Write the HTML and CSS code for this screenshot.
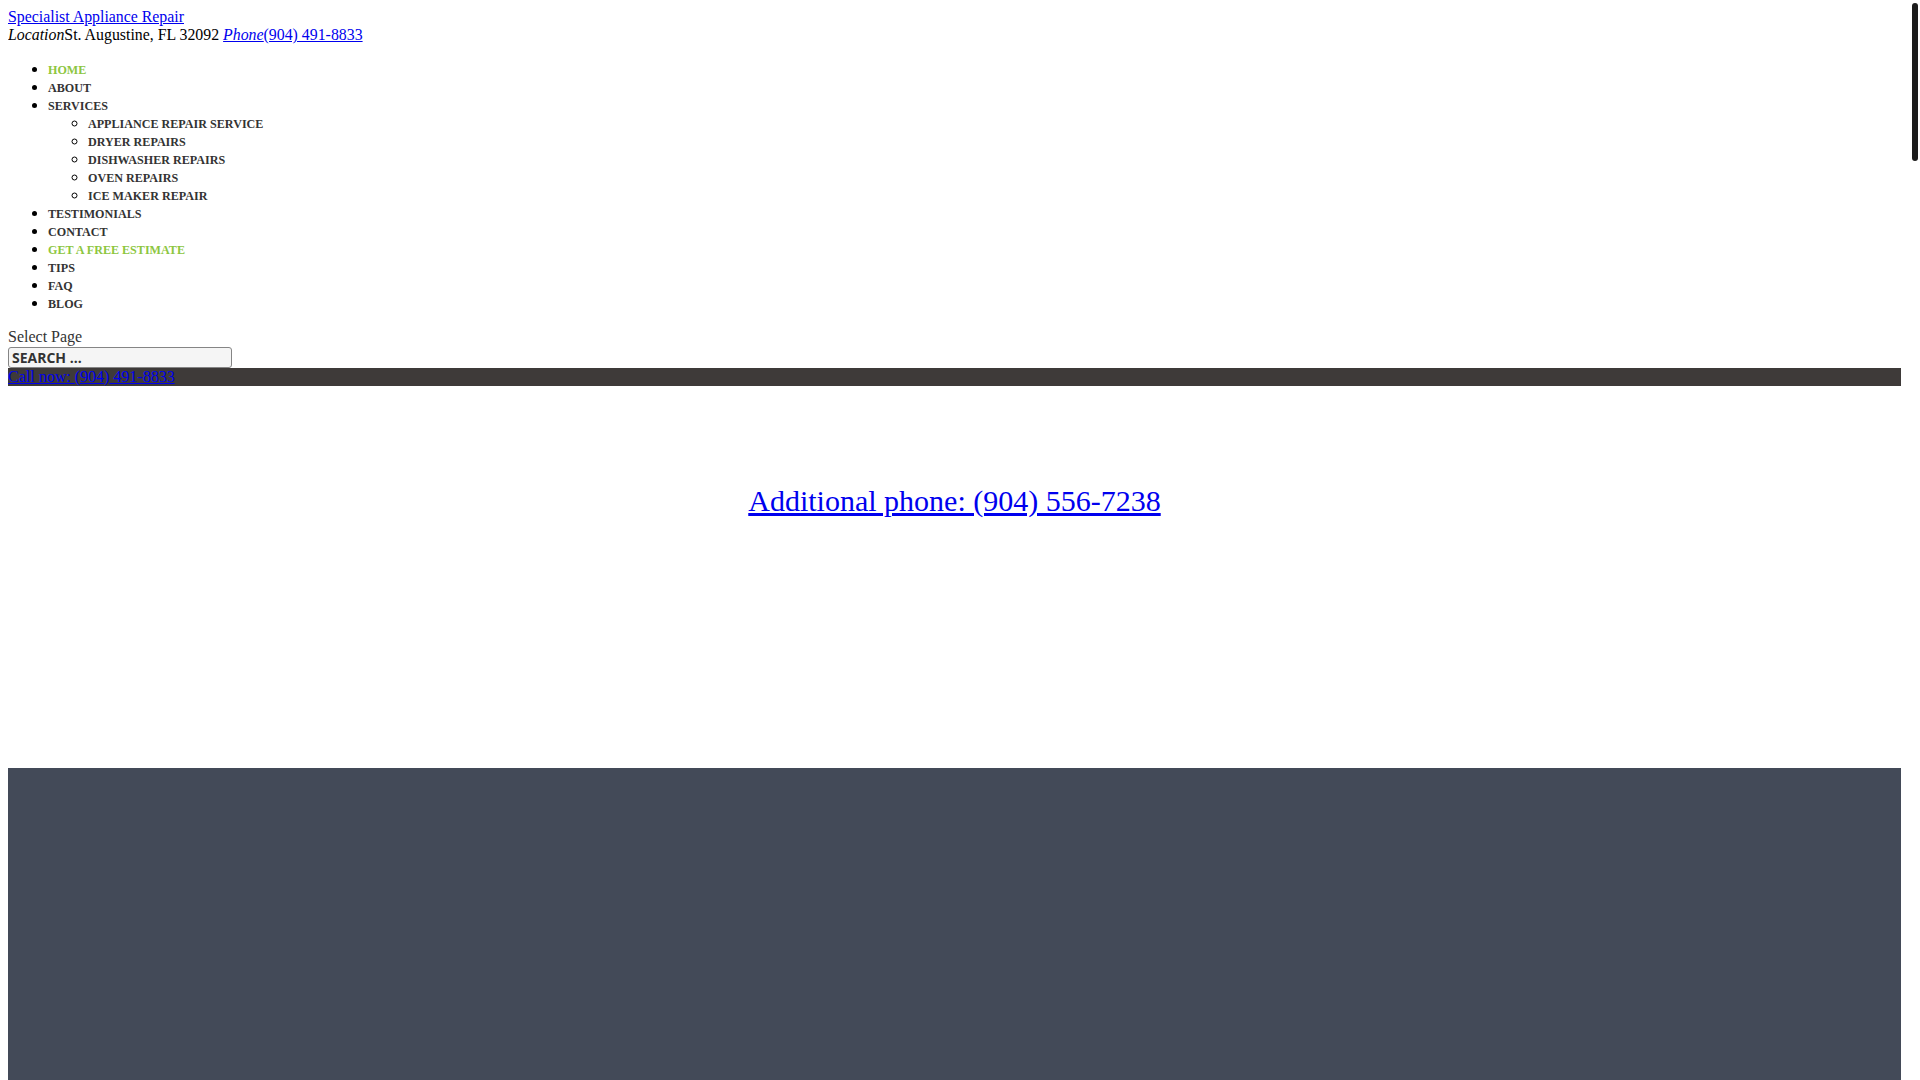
FILE: index.html
```html
<!DOCTYPE html>
<html lang="en">
<head>
<meta charset="utf-8">
<title>Specialist Appliance Repair</title>
<link rel="stylesheet" href="styles.css">
</head>
<body>
<div class="brand"><a href="#">Specialist Appliance Repair</a></div>
<div class="contact-line"><em>Location</em>St. Augustine, FL 32092 <a href="#"><em>Phone</em>(904) 491-8833</a></div>
<ul class="menu">
  <li><a class="active" href="#">HOME</a></li>
  <li><a href="#">ABOUT</a></li>
  <li><a href="#">SERVICES</a>
    <ul class="submenu">
      <li><a href="#">APPLIANCE REPAIR SERVICE</a></li>
      <li><a href="#">DRYER REPAIRS</a></li>
      <li><a href="#">DISHWASHER REPAIRS</a></li>
      <li><a href="#">OVEN REPAIRS</a></li>
      <li><a href="#">ICE MAKER REPAIR</a></li>
    </ul>
  </li>
  <li><a href="#">TESTIMONIALS</a></li>
  <li><a href="#">CONTACT</a></li>
  <li><a class="active" href="#">GET A FREE ESTIMATE</a></li>
  <li><a href="#">TIPS</a></li>
  <li><a href="#">FAQ</a></li>
  <li><a href="#">BLOG</a></li>
</ul>
<div class="select-page">Select Page</div>
<form class="search-form"><input class="search-input" type="text" placeholder="SEARCH ..."></form>
<div class="call-bar"><a href="#">Call now: (904) 491-8833</a></div>
<div class="hero"><a class="hero-link" href="#">Additional phone: (904) 556-7238</a></div>
<div class="slate"></div>
<div class="scroll-thumb"></div>
</body>
</html>
```
FILE: styles.css
```css
html, body {
  background: #ffffff;
}
body {
  margin: 8px 19px 8px 8px;
  font-family: "Liberation Serif", "Times New Roman", serif;
  font-size: 16px;
  color: #000;
}
.brand, .contact-line {
  font-size: 15.85px;
  line-height: 18px;
}
.contact-line a em {
  font-style: italic;
}
.menu {
  margin: 16px 0;
  padding-left: 40px;
  list-style: disc;
}
.submenu {
  margin: 0;
  padding-left: 40px;
  list-style: circle;
}
.menu a {
  font-size: 12.1px;
  font-weight: bold;
  color: #333333;
  text-decoration: none;
}
.menu a.active {
  color: #8dc63f;
}
.select-page {
  color: #333333;
}
.search-form {
  margin: 1px 0 0;
}
.search-input {
  display: block;
  width: 224px;
  height: 21px;
  box-sizing: border-box;
  margin: 0;
  padding: 0 3px;
  border: 1px solid #858585;
  border-radius: 3px;
  background: #f5f5f5;
  font-family: "Open Sans", Roboto, "Liberation Sans", sans-serif;
  font-weight: bold;
  font-size: 14px;
  color: #333;
}
.search-input::placeholder {
  color: #333333;
  opacity: 1;
}
.call-bar {
  background: #3e3a39;
  height: 18px;
  line-height: 18px;
}
.hero {
  padding: 96px 0 249px;
  text-align: center;
  font-size: 30px;
  line-height: 37px;
}
.slate {
  background: #434a58;
  height: 6550px;
}
.scroll-thumb {
  position: fixed;
  top: 3px;
  right: 2px;
  width: 6px;
  height: 158px;
  border-radius: 3px;
  background: #1c1c1c;
}
```
